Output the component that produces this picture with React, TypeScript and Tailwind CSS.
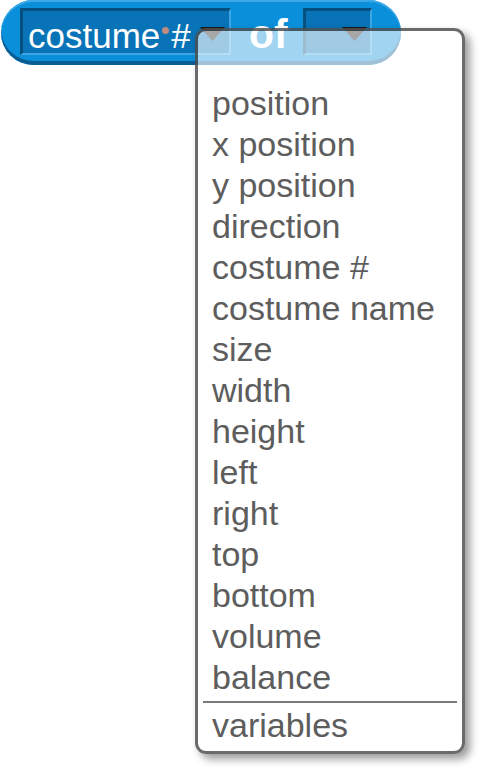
import React from "react";

const items = [
  "position",
  "x position",
  "y position",
  "direction",
  "costume #",
  "costume name",
  "size",
  "width",
  "height",
  "left",
  "right",
  "top",
  "bottom",
  "volume",
  "balance",
];

function Tri() {
  return (
    <svg width="25" height="14" viewBox="0 0 25 14" className="block shrink-0">
      <polygon points="0,0 25,0 12.5,14" fill="#1a1a1a" />
    </svg>
  );
}

export default function App() {
  return (
    <div
      className="relative w-[480px] h-[768px] bg-white overflow-hidden"
      style={{ fontFamily: '"Liberation Sans", Arial, sans-serif' }}
    >
      {/* block */}
      <div className="ml-[1px] w-[400px] h-[65px] rounded-full bg-[#0a8fda] shadow-[inset_0_-4px_0_#0a5e94,inset_0_2px_0_#3aa8e8] flex items-start pl-[19px] pt-[8px]">
        <div className="w-[211px] h-[47px] bg-[#0873b7] border-t-[3px] border-l-[3px] border-t-[#05507f] border-l-[#05507f] border-b-[2px] border-r-[2px] border-b-[#3ea6e4] border-r-[#3ea6e4] flex items-start pt-[6px] pl-[5px] pr-[4px]">
          <span className="text-white text-[35px] leading-[38px]">costume</span>
          <span className="w-[7px] h-[7px] rounded-full bg-[#c4897f] mt-[10px] mx-[2px] shrink-0" />
          <span className="text-white text-[35px] leading-[38px]">#</span>
          <div className="ml-auto mt-[10px]">
            <Tri />
          </div>
        </div>
        <span className="text-white font-bold text-[41px] leading-[44px] mt-[4px] ml-[18px]">
          of
        </span>
        <div className="ml-[15px] w-[69px] h-[47px] bg-[#0873b7] border-t-[3px] border-l-[3px] border-t-[#05507f] border-l-[#05507f] border-b-[2px] border-r-[2px] border-b-[#3ea6e4] border-r-[#3ea6e4] flex items-start justify-end pt-[16px] pr-[3px]">
          <Tri />
        </div>
      </div>

      {/* menu */}
      <div className="absolute z-10 left-[195px] top-[28px] w-[270px] h-[726px] rounded-[11px] border-[3px] border-[rgba(0,0,0,0.58)] bg-[rgba(255,255,255,0.62)] shadow-[5px_5px_8px_rgba(0,0,0,0.4)] pt-[52px] flex flex-col">
        {items.map((t) => (
          <div key={t} className="pl-[14px] text-[34px] leading-[41px] text-[#5d5d5d] whitespace-nowrap">
            {t}
          </div>
        ))}
        <div className="mt-[3px] mx-[5px] h-[2px] bg-[#7a7a7a]" />
        <div className="mt-[2px] pl-[14px] text-[34px] leading-[41px] text-[#5d5d5d] whitespace-nowrap">
          variables
        </div>
      </div>
    </div>
  );
}
